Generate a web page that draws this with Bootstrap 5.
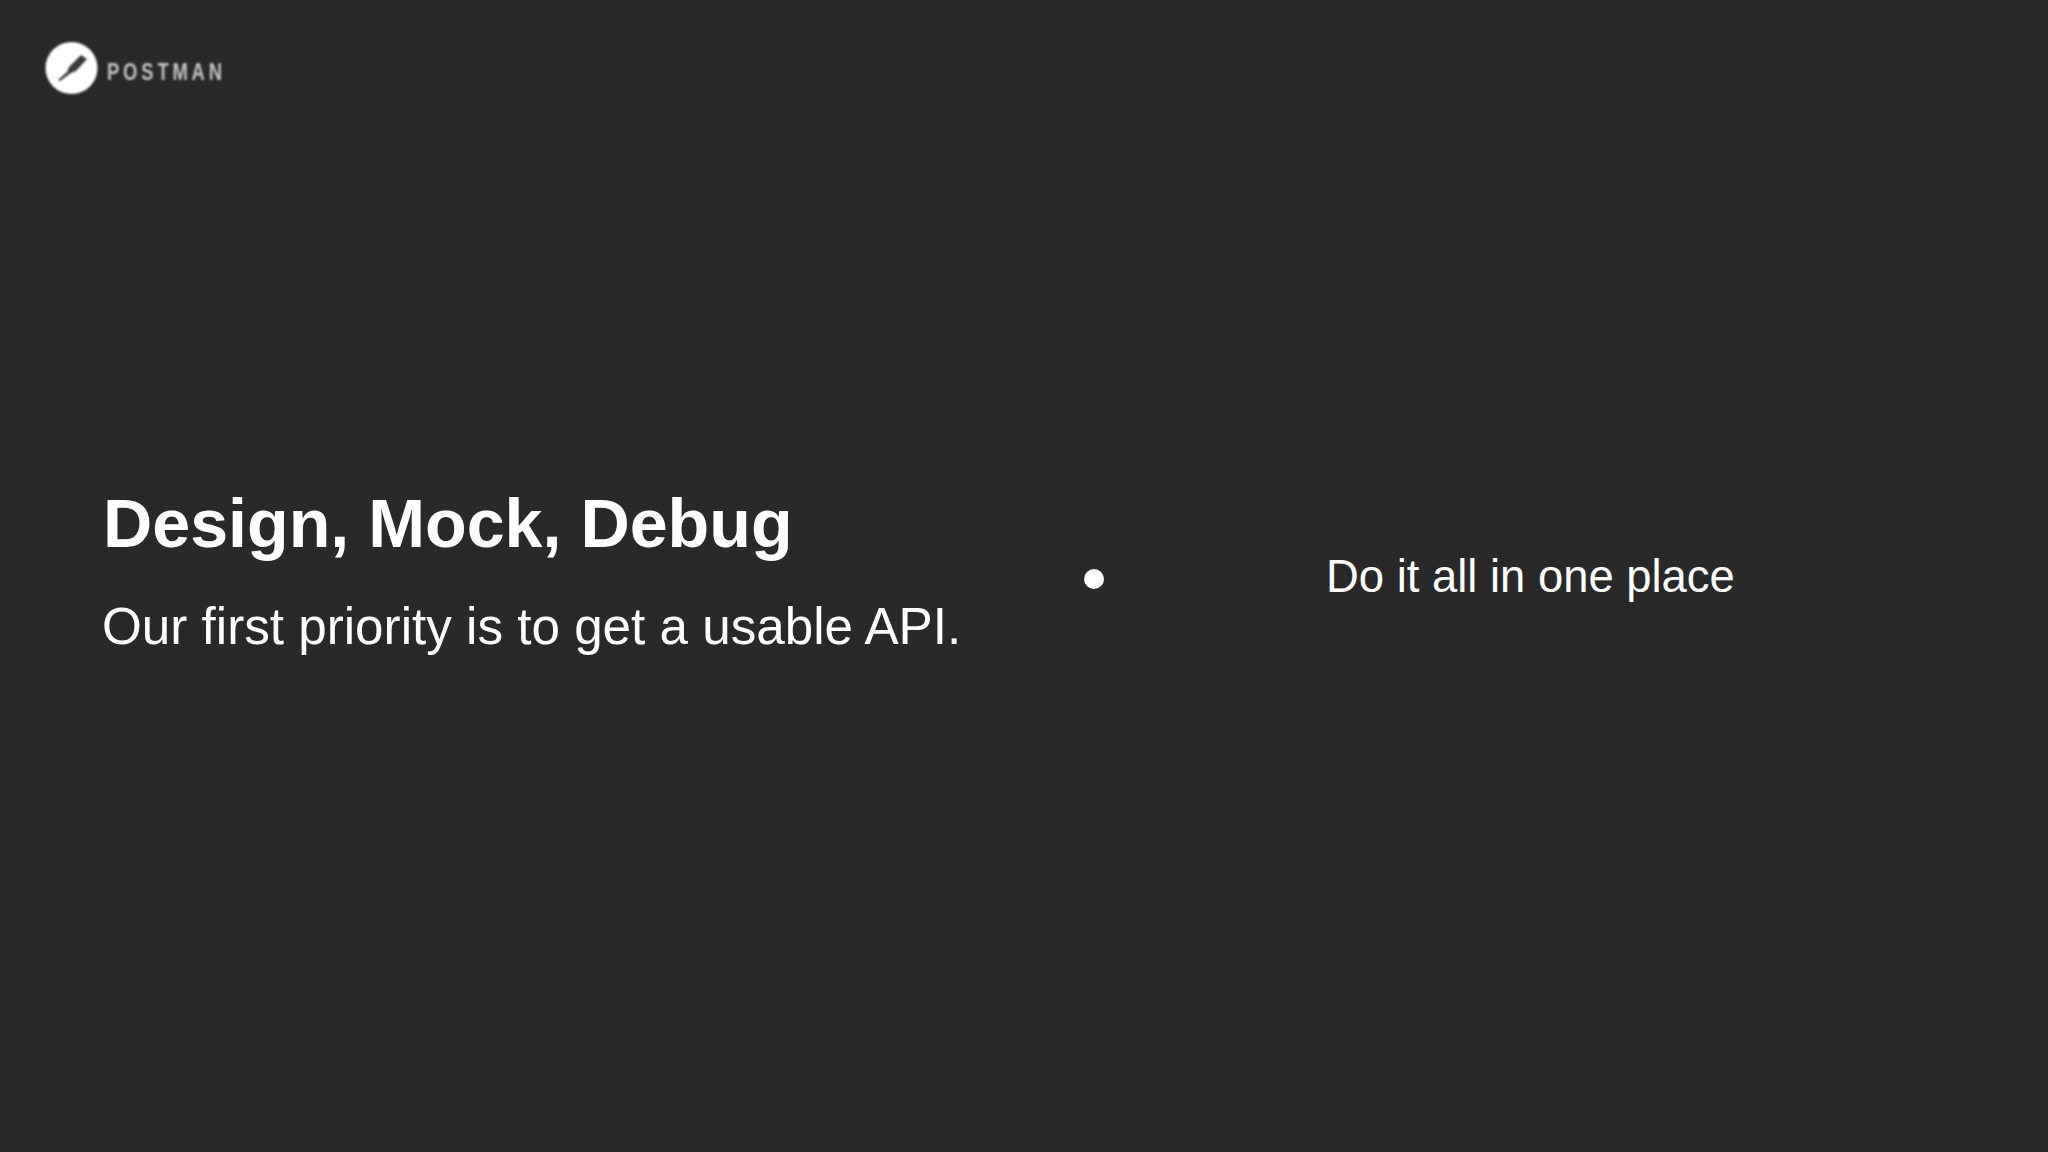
<!DOCTYPE html>
<html lang="en">
<head>
<meta charset="utf-8">
<title>Design, Mock, Debug</title>
<link href="https://cdn.jsdelivr.net/npm/bootstrap@5.3.0/dist/css/bootstrap.min.css" rel="stylesheet">
<style>
html, body { height: 100%; }
body { background: #292929; color: #fff; font-family: "Liberation Sans", Arial, sans-serif; overflow: hidden; }
.slide { height: 1152px; }
.logo-bar { position: absolute; left: 45px; top: 42px; filter: blur(.9px); gap: 9px; }
.logo-word { font-size: 23px; line-height: 1; font-weight: 700; letter-spacing: 4.8px; color: #c4c4c4; transform: scaleX(.8); transform-origin: left center; margin-top: 8px; }
.slide-left { padding-left: 102px; padding-bottom: 11px; width: 1083px; flex: none; }
.slide-title { font-size: 68.2px; font-weight: 700; line-height: 1; margin: 0 0 44px 1px; }
.slide-sub { font-size: 51.2px; line-height: 1; margin: 0; }
.slide-right { flex: 1; padding-top: 2px; }
.dot-cell { width: 242px; flex: none; margin-left: 1px; }
.dot-mark { width: 20px; height: 20px; margin-top: 3px; background: #fff; border-radius: 50%; display: block; }
.point-text { font-size: 45.4px; line-height: 1; }
</style>
</head>
<body>
<div class="slide d-flex align-items-center position-relative">
  <div class="logo-bar d-flex align-items-center">
    <svg width="53" height="52" viewBox="0 0 53 52"><circle cx="26.5" cy="26" r="26" fill="#fff"/><path d="M13 38 L22 30 L24 25 L36 13 L42 17 L31 29 L26 31 L15 39 Z" fill="#3a3a3a"/></svg>
    <span class="logo-word">POSTMAN</span>
  </div>
  <div class="slide-left">
    <h1 class="slide-title">Design, Mock, Debug</h1>
    <p class="slide-sub">Our first priority is to get a usable API.</p>
  </div>
  <div class="slide-right d-flex align-items-center">
    <div class="dot-cell"><span class="dot-mark"></span></div>
    <div class="point-text">Do it all in one place</div>
  </div>
</div>
<script src="https://cdn.jsdelivr.net/npm/bootstrap@5.3.0/dist/js/bootstrap.bundle.min.js"></script>
</body>
</html>
